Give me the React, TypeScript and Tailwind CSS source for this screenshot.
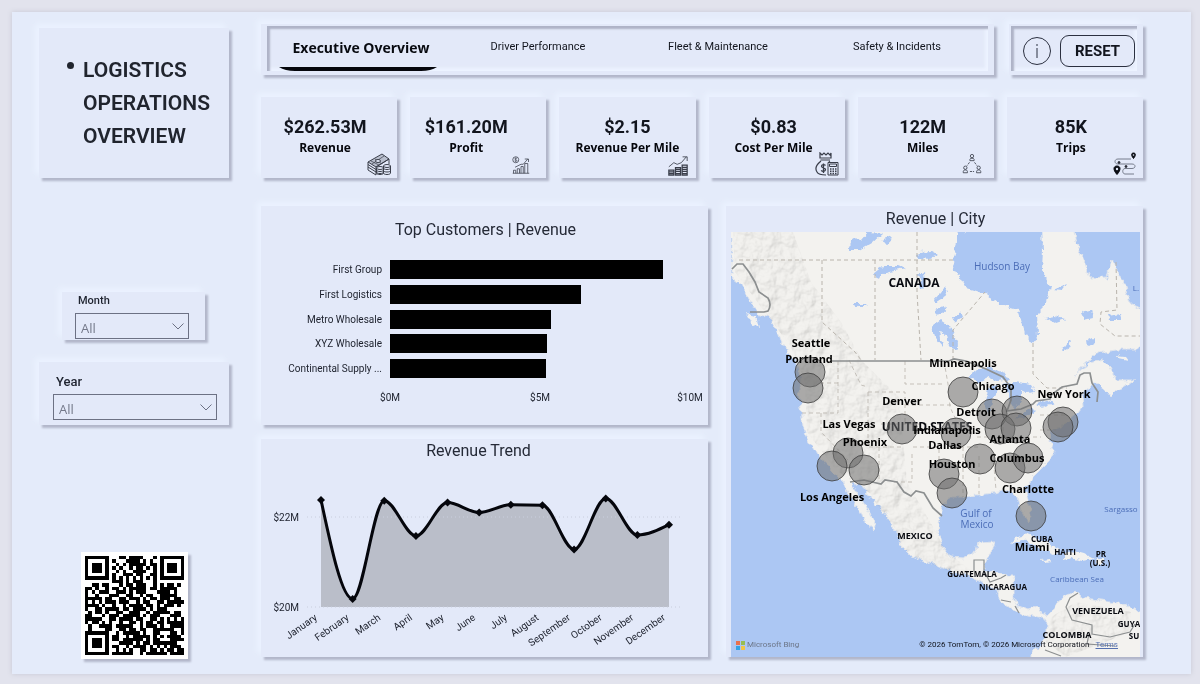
import type { ReactNode } from "react";

const raised =
  "bg-[#e3e9f9] shadow-[3px_3px_2px_#b2b7ca,-4px_-4px_6px_#ebf2ff]";
const inset = "shadow-[inset_3px_3px_2px_#aeb3c7,inset_-3px_-3px_3px_#edf3ff]";

const TABS = ["Executive Overview", "Driver Performance", "Fleet & Maintenance", "Safety & Incidents"];

const CUSTOMERS = [
  { name: "First Group", value: 9.1 },
  { name: "First Logistics", value: 6.35 },
  { name: "Metro Wholesale", value: 5.38 },
  { name: "XYZ Wholesale", value: 5.24 },
  { name: "Continental Supply ...", value: 5.2 },
];

const TREND: [string, number][] = [
  ["January", 22.38],
  ["February", 20.18],
  ["March", 22.36],
  ["April", 21.58],
  ["May", 22.32],
  ["June", 22.1],
  ["July", 22.27],
  ["August", 22.26],
  ["September", 21.28],
  ["October", 22.41],
  ["November", 21.6],
  ["December", 21.83],
];

const CITIES: { name: string; x: number; y: number }[] = [
  { name: "Seattle", x: 80, y: 115 },
  { name: "Portland", x: 78, y: 131 },
  { name: "Minneapolis", x: 232, y: 135 },
  { name: "Chicago", x: 262, y: 158 },
  { name: "New York", x: 333, y: 166 },
  { name: "Denver", x: 171, y: 173 },
  { name: "Detroit", x: 245, y: 184 },
  { name: "Las Vegas", x: 118, y: 196 },
  { name: "Indianapolis", x: 216, y: 202 },
  { name: "Phoenix", x: 134, y: 214 },
  { name: "Dallas", x: 214, y: 217 },
  { name: "Atlanta", x: 279, y: 211 },
  { name: "Houston", x: 221, y: 236 },
  { name: "Columbus", x: 286, y: 230 },
  { name: "Charlotte", x: 297, y: 261 },
  { name: "Los Angeles", x: 101, y: 269 },
  { name: "Miami", x: 301, y: 319 },
];

const BUBBLES = [
  [79, 140], [77, 156], [232, 160], [261, 182], [286, 179], [269, 197], [285, 196], [332, 190], [327, 195],
  [171, 197], [225, 201], [117, 221], [101, 234], [133, 238], [213, 242], [221, 261], [249, 227], [279, 236],
  [297, 226], [300, 284],
];

const COUNTRIES: { name: string; x: number; y: number; size: number }[] = [
  { name: "CANADA", x: 183, y: 55, size: 12 },
  { name: "UNITED STATES", x: 196, y: 199, size: 12 },
  { name: "MEXICO", x: 184, y: 307, size: 9 },
  { name: "GUATEMALA", x: 241, y: 345, size: 8 },
  { name: "NICARAGUA", x: 272, y: 358, size: 8 },
  { name: "CUBA", x: 311, y: 310, size: 8 },
  { name: "HAITI", x: 334, y: 323, size: 8 },
  { name: "PR", x: 370, y: 325, size: 8 },
  { name: "(U.S.)", x: 369, y: 334, size: 8 },
  { name: "VENEZUELA", x: 367, y: 382, size: 9 },
  { name: "COLOMBIA", x: 336, y: 406, size: 9 },
  { name: "GUYA", x: 398, y: 395, size: 8 },
  { name: "SU", x: 403, y: 407, size: 8 },
];

const QR = [
  "#######...##.####...#.#######",
  "#.....#.#...####.#.#..#.....#",
  "#.###.#..#.#.#####.##.#.###.#",
  "#.###.#.#.#..#.##.#.#.#.###.#",
  "#.###.#..#.#..####..#.#.###.#",
  "#.....#.#..###.##..##.#.....#",
  "#######.#.#.#.#.#.#.#.#######",
  "........###.#.###...#........",
  "..##.##...#.##.###..#.#.##.#.",
  "##.#..#.##.#.#####.##.#####..",
  "#.#.###..###.#.###...####.#..",
  "#..#...###..##..#.##..#####..",
  "#####.##..##.###.#.##.###.##.",
  "#.#.#.###.###..#.##..##.#####",
  "####.#..#..#.####.##.#.###.#.",
  "#..##.####.##.####.#.###.....",
  ".#.##.#..##..###..#.#####.##.",
  "##...#.###.#####.#.###...###.",
  "#####..##.####.##..##.#.#.#.#",
  "#.##.#.#..#..##.#.##.##.#####",
  ".#..####.#####..#.###.#..####",
  ".#....##..##.##.##..######..#",
  "#######..#.#####.#..##...##.#",
  "#.....#.##..#.#####.#.#.####.",
  "#.###.#.##.######.#.##...####",
  "#.###.#...####.#.##.#######..",
  "#.###.#.##..#.####.#.#.#.###.",
  "#.....#..#.#.#..##.##.#.##.##",
  "#######.######..#.######.####",
];

const LAND =
  "M0 -5L0 43L9 51L17 65L26 81L39 85L44 95L49 108L56 118L66 131L69 145L68 158L70 175L72 195L79 211L89 225L102 241L111 248L117 261L126 275L136 291L144 298L146 296L139 281L132 270L122 255L121 250L132 255L142 268L156 285L167 301L169 313L179 323L196 330L216 338L236 343L252 351L266 358L271 370L282 378L297 383L309 385L316 388L316 401L312 411L301 421L301 430L415 430L415 384L399 375L386 370L369 368L352 366L344 360L332 365L326 370L321 380L316 385L307 375L297 378L287 375L282 365L282 351L284 343L274 343L262 340L252 338L256 328L261 318L264 310L247 311L244 321L232 326L219 325L212 315L207 301L209 285L211 273L219 265L232 265L246 263L262 261L279 258L286 265L289 275L294 285L297 290L300 283L297 268L294 258L302 245L316 231L324 221L319 208L319 198L336 191L347 181L352 175L351 161L366 150L371 155L379 165L386 158L404 148L386 148L379 135L372 128L359 131L343 143L366 121L386 118L406 118L415 111L415 78L399 71L392 48L381 28L376 45L359 46L354 31L346 11L342 -5Z";

const HUDSON =
  "M236 -5L311 -5L312 18L311 38L319 55L316 71L306 81L307 105L302 111L294 101L287 78L269 73L252 61L236 56L227 41L224 28L229 11Z";

const LAKES = [
  "M236 145L246 138L258 135L274 141L278 147L266 149L258 146L248 151Z",
  "M258 157L265 152L268 156L262 166L260 178L256 182L254 173Z",
  "M272 152L282 150L300 153L304 160L296 161L290 158L290 168L284 178L279 170L277 160Z",
  "M283 186L302 176L304 178L292 187Z",
  "M304 173L321 167L324 171L310 175Z",
  "M117 18L122 7L130 8L137 0L152 1L141 11L129 18Z",
  "M142 42L152 34L167 34L174 37L158 40L145 47Z",
  "M202 93L209 88L220 95L227 112L225 118L217 115L214 104L209 100L212 115L204 106Z",
  "M203 68L214 55L218 57L212 66L204 71Z",
  "M188 43L193 40L194 54L190 58Z",
  "M185 22L198 19L206 24L199 27L187 26Z",
  "M227 -2L233 -2L233 41L226 43L221 35Z",
  "M203 79L212 75L214 80L207 83Z",
  "M222 85L229 81L231 86L224 90Z",
  "M123 72L136 72L130 76Z",
  "M313 86L325 84L334 87L322 91Z",
  "M350 80L360 78L362 86L354 88Z",
  "M376 83L388 81L390 88L378 88Z",
  "M331 118L338 108L340 110L335 119Z",
  "M357 108L363 105L363 112L358 115Z",
  "M323 57L335 52L331 58Z",
  "M150 8L161 4L157 12Z",
];

const ISLANDS = [
  "M278 312L284 306L296 303L308 308L318 312L329 319L322 322L308 316L292 307Z",
  "M333 322L342 319L353 322L363 327L352 329L341 326L333 328Z",
  "M310 328L318 327L320 330L312 331Z",
  "M365 326L374 326L374 331L366 331Z",
  "M384 123L394 124L397 128L388 126Z",
  "M16 82L25 84L28 96L21 92Z",
  "M301 3L306 5L304 12L300 8Z",
];

function KpiIcon({ name }: { name: string }) {
  const common = {
    viewBox: "0 0 24 24",
    fill: "none",
    stroke: "#3a3e4a",
    strokeWidth: 1,
    "aria-hidden": true,
    className: "absolute right-1.5 bottom-0.5 size-6",
  };
  if (name === "Revenue")
    return (
      <svg {...common}>
        <path d="M1 10L15 2L22 7L9 15Z" fill="#b9bfce" />
        <path d="M1 10v8l8 5v-8 M1 12.500l8 5 M1 15l8 5 M9 15l13-8v5" />
        <path d="M5 12L17 4 M8 7l7 5 M4 9l8 4" strokeWidth="0.700" />
        <ellipse cx="11" cy="9" rx="2.500" ry="1.500" fill="#e3e9f9" />
        <ellipse cx="13" cy="16" rx="3.500" ry="1.500" fill="#e3e9f9" />
        <path d="M9.500 16v5c0 2 7 2 7 0v-5 M9.500 18c0 2 7 2 7 0 M9.500 20c0 2 7 2 7 0" />
        <ellipse cx="20" cy="14" rx="3.500" ry="1.500" fill="#e3e9f9" />
        <path d="M16.500 14v7c0 2 7 2 7 0v-7 M16.500 16c0 2 7 2 7 0 M16.500 18.500c0 2 7 2 7 0" />
      </svg>
    );
  if (name === "Profit")
    return (
      <svg {...common} className="absolute right-4 bottom-1 size-[18px]">
        <circle cx="5" cy="5" r="4" />
        <path d="M6.500 3.500c-1-1-3-.500-3 .500s3 1 3 2-2 1.500-3 .500 M5 2v6" strokeWidth="0.800" />
        <path d="M2 23v-4h3v4 M7 23v-6h3v6 M12 23v-9h3v9 M17 23V10h4v13 M1 23h22 M4 15l8-4 3 0 6-7 M17 4h5v4" />
      </svg>
    );
  if (name === "Revenue Per Mile")
    return (
      <svg {...common} className="absolute right-2 bottom-0.5 size-5">
        <path d="M1 13l6-5 4 2 5-2 6-7 M17.500 1H23v5" />
        <path
          d="M1 17h6v6H1z M9 14h6v9H9z M17 11h6v12h-6z M1 19h6 M1 21h6 M9 16h6 M9 18.500h6 M9 21h6 M17 13.500h6 M17 16h6 M17 18.500h6 M17 21h6"
          strokeWidth="1.500"
        />
      </svg>
    );
  if (name === "Cost Per Mile")
    return (
      <svg {...common}>
        <path d="M5 1l2 2 2-2 2 2 2-2 2 2 1-2v5H5z M5.500 8H15 M6 9C1 13 0 17 2 20c1 2 3 3 9 3 M14 9l1 1.500" strokeWidth="1.200" />
        <path d="M10.500 13.500c-1-1.500-4-1-4 .800 0 2 4 1.200 4 3.200s-3 2.500-4.300.800 M8.500 11.500v9.500" strokeWidth="1.300" />
        <path d="M13 10.500h10V23H13z M14.500 12h7v2.500h-7z" />
        <path d="M15 17h1.500 M17.500 17H19 M20 17h1.500 M15 19.200h1.500 M17.500 19.200H19 M20 19.200h1.500 M15 21.400h1.500 M17.500 21.400H19 M20 21.400h1.500" strokeWidth="1.500" />
      </svg>
    );
  if (name === "Miles")
    return (
      <svg {...common} className="absolute right-3 bottom-1 size-5">
        <circle cx="12" cy="2.500" r="2" />
        <path d="M9.500 8V6.500c0-2 5-2 5 0V8z" />
        <circle cx="4" cy="16.500" r="2" />
        <path d="M1.500 22.500V21c0-2.500 5-2.500 5 0v1.500z" />
        <circle cx="20" cy="16.500" r="2" />
        <path d="M17.500 22.500V21c0-2.500 5-2.500 5 0v1.500z" />
        <path d="M9 10l-3 4 M15 10l3 4 M9.500 21h5" strokeDasharray="2.500 1" />
      </svg>
    );
  return (
    <svg {...common}>
      <path d="M18 7H5c-4 0-4 5 0 5h14c4 0 4 4.500 0 4.500h-7c-3 0-3 5.500 0 5.500h9" stroke="#777d8c" />
      <path d="M20.500 6.500C18 3.500 18 1 20.500 1s2.500 2.500 0 5.500z M4 22.500C-.500 17.500.500 14 4 14s4.500 3.500 0 8.500z" fill="#0b0d14" stroke="#0b0d14" />
      <circle cx="20.500" cy="3" r="0.800" fill="#e3e9f9" stroke="none" />
      <circle cx="4" cy="17" r="1.200" fill="#e3e9f9" stroke="none" />
      <circle cx="6" cy="10.500" r="1" fill="#0b0d14" />
      <circle cx="13" cy="14.500" r="1" fill="#0b0d14" />
    </svg>
  );
}

const KPIS = [
  { value: "$262.53M", label: "Revenue", pad: "pr-2" },
  { value: "$161.20M", label: "Profit", pad: "pr-6" },
  { value: "$2.15", label: "Revenue Per Mile", pad: "pr-0" },
  { value: "$0.83", label: "Cost Per Mile", pad: "pr-1.5" },
  { value: "122M", label: "Miles", pad: "pr-1.5" },
  { value: "85K", label: "Trips", pad: "pr-2" },
];

function Filter({ id, label, options, className, labelClass }: {
  id: string;
  label: string;
  options: string[];
  className: string;
  labelClass: string;
}) {
  return (
    <div className={`${raised} ${className}`}>
      <label htmlFor={id} className={`block font-medium text-[#1f2430] ${labelClass}`}>
        {label}
      </label>
      <div className="relative">
        <select
          id={id}
          className="block h-[26px] w-full appearance-none border border-[#6c7184] bg-transparent px-[5px] pt-1 font-['Open_Sans',sans-serif] text-[13px] leading-none text-[#74798a]"
        >
          {options.map((o) => (
            <option key={o}>{o}</option>
          ))}
        </select>
        <svg viewBox="0 0 12 7" fill="none" stroke="#6c7184" className="pointer-events-none absolute top-2.5 right-[5px] h-[7px] w-3" aria-hidden="true">
          <path d="M0.500 0.500L6 6L11.500 0.500" />
        </svg>
      </div>
    </div>
  );
}

function QrCode() {
  return (
    <svg viewBox="0 0 29 29" shapeRendering="crispEdges" role="img" aria-label="QR code" className="w-full">
      {QR.map((row, y) =>
        [...row].map((c, x) => (c === "#" ? <rect key={`${x}-${y}`} x={x} y={y} width="1" height="1" /> : null))
      )}
    </svg>
  );
}

function ChartTitle({ children }: { children: ReactNode }) {
  return <h2 className="text-base leading-6 text-[#252a37]">{children}</h2>;
}

function CustomersChart() {
  return (
    <section className={`${raised} h-[219px] pt-3 pr-[18px] pl-4`}>
      <div className="pl-1 text-center">
        <ChartTitle>Top Customers | Revenue</ChartTitle>
      </div>
      <div className="mt-[18px] flex h-[118px] flex-col justify-between">
        {CUSTOMERS.map((c) => (
          <div key={c.name} className="flex h-[19px] items-center">
            <span className="w-[105px] shrink-0 text-right text-[10px] whitespace-nowrap text-[#1c202c]">{c.name}</span>
            <div className="ml-2 h-full flex-1">
              <div className="h-full bg-black" style={{ width: `${c.value * 10}%` }} />
            </div>
          </div>
        ))}
      </div>
      <div className="mt-3 ml-[113px] flex justify-between text-[10px] leading-4 text-[#1c202c]">
        {["$0M", "$5M", "$10M"].map((t) => (
          <span key={t} className="flex w-0 justify-center">{t}</span>
        ))}
      </div>
    </section>
  );
}

// monotone cubic interpolation, so the line never overshoots its points
function monotonePath(pts: [number, number][]) {
  const s = pts.slice(1).map((p, i) => (p[1] - pts[i][1]) / (p[0] - pts[i][0]));
  const n = pts.length;
  const t = pts.map((_, i) => {
    if (i === 0 || i === n - 1) return 0;
    const a = s[i - 1];
    const b = s[i];
    if (a * b <= 0) return 0;
    return Math.sign(a) * 2 * Math.min(Math.abs(a), Math.abs(b), Math.abs(a + b) / 4);
  });
  t[0] = (3 * s[0] - t[1]) / 2;
  t[n - 1] = (3 * s[n - 2] - t[n - 2]) / 2;
  let d = `M${pts[0][0]} ${pts[0][1]}`;
  for (let i = 1; i < n; i++) {
    const [x0, y0] = pts[i - 1];
    const [x1, y1] = pts[i];
    const dx = (x1 - x0) / 3;
    d += `C${x0 + dx} ${y0 + dx * t[i - 1]} ${x1 - dx} ${y1 - dx * t[i]} ${x1} ${y1}`;
  }
  return d;
}

function TrendChart() {
  const pts = TREND.map(([, v], i): [number, number] => [60 + (i * 348) / 11, 47 + (22 - v) * 45]);
  const line = monotonePath(pts);
  return (
    <section className={`${raised} h-[218px]`}>
      <div className="pr-3 text-center">
        <ChartTitle>Revenue Trend</ChartTitle>
      </div>
      <svg viewBox="0 0 447 184" className="mt-[7px] w-full text-[10px]" role="img" aria-label="Revenue by month">
        <path d={`${line}L408 137L60 137Z`} fill="#babec9" />
        {[47, 137].map((y) => (
          <line key={y} x1="46" x2="420" y1={y} y2={y} stroke="#c9cedd" strokeDasharray="1 3" />
        ))}
        <text x="38" y="51" textAnchor="end" fill="#1c202c">$22M</text>
        <text x="38" y="141" textAnchor="end" fill="#1c202c">$20M</text>
        <path d={line} fill="none" stroke="#05060c" strokeWidth="3" />
        {pts.map(([x, y], i) => (
          <g key={TREND[i][0]}>
            <path d={`M${x - 4} ${y}L${x} ${y - 4}L${x + 4} ${y}L${x} ${y + 4}Z`} fill="#05060c" />
            <text textAnchor="end" fill="#1c202c" transform={`translate(${x - 3} 149) rotate(-35)`}>
              {TREND[i][0]}
            </text>
          </g>
        ))}
      </svg>
    </section>
  );
}

function CityMap() {
  return (
    <section className={`${raised} h-[451px] pr-[3px] pl-[5px]`}>
      <div className="pt-px pb-px text-center">
        <ChartTitle>Revenue | City</ChartTitle>
      </div>
      <div className="relative">
        <svg
          viewBox="0 0 409 425"
          className="w-full bg-[#acc7f3] font-['Open_Sans',sans-serif] font-bold"
          role="img"
          aria-label="Map of revenue by city"
        >
          <defs>
            <filter id="coast" x="-5%" y="-5%" width="110%" height="110%">
              <feTurbulence type="fractalNoise" baseFrequency="0.15" numOctaves="3" seed="4" />
              <feDisplacementMap in="SourceGraphic" scale="7" xChannelSelector="R" yChannelSelector="G" />
            </filter>
            <filter id="relief" x="0" y="0" width="100%" height="100%">
              <feTurbulence type="fractalNoise" baseFrequency="0.09" numOctaves="4" seed="9" result="n" />
              <feDiffuseLighting in="n" surfaceScale="4" lightingColor="#ffffff" result="l">
                <feDistantLight azimuth="225" elevation="60" />
              </feDiffuseLighting>
              <feComposite in="l" in2="SourceAlpha" operator="in" />
            </filter>
            <clipPath id="land">
              <path d={LAND} />
            </clipPath>
          </defs>
          <g filter="url(#coast)">
            <path d={LAND} fill="#f3f2ef" stroke="#dfe4ec" />
            {ISLANDS.map((d) => <path key={d} d={d} fill="#f3f2ef" />)}
            <path d={HUDSON} fill="#acc7f3" />
            {LAKES.map((d) => <path key={d} d={d} fill="#acc7f3" />)}
          </g>
          <g clipPath="url(#land)" opacity="0.28" style={{ mixBlendMode: "multiply" }}>
            <path
              d="M2 0L62 0L80 50L110 90L132 130L168 165L176 250L205 300L215 320L240 338L240 350L190 330L165 310L140 262L105 238L76 200L74 150L60 115L30 75L4 40Z M320 385L345 370L400 380L400 400L335 425L315 410Z"
              filter="url(#relief)"
            />
          </g>
          <g fill="none" stroke="#b9b4ac" strokeDasharray="4 3">
            <path d="M8 28H224 M91 28V90L124 120L130 128 M144 28V128 M186 0V60L190 128 M222 128V98L254 60 M302 111V142L316 156L336 156 M385 30L386 78L370 80L369 92L384 104H409" />
            <path d="M107 129V181H70 M90 181V200L117 228 M107 151H88 M118 128L130 153L137 155 M137 160H174V192 M137 160V215H171 M174 129V152H214 M174 173H220 M213 129L217 152L219 175L226 190 M150 192H195L232 192 M148 215V250 M182 215H208V230L229 233 M181 222V250H160 M229 215H250 M232 215V265 M248 224V262 M262 224L265 258 M246 205H310 M272 188V205 M309 183H335 M309 198H325 M279 258L296 256" strokeWidth="0.800" />
          </g>
          <g fill="none" stroke="#8c8f90" strokeWidth="1.700">
            <path d="M1 37L6 32L12 32L18 40L24 50L28 60L37 66Q41 73 37 79L33 80H19 M101 129H218L223 127L235 129L255 137L272 145L280 156L280 168L276 179L290 177L302 172L305 169L319 167L320 163L331 155L346 152L349 143L353 141H359L361 151L367 160L366 170 M119 250L133 248L150 252L154 248L166 250L173 260L180 264L185 259L193 261L202 276L211 284" />
            <path d="M243 339V328H253V343 M253 339L259 350L270 346L275 343 M270 368L280 370 M284 374L288 381 M347 361L339 366L335 375L341 388L361 393V402L379 405L399 400L404 392 M358 402L356 412L384 414 M314 418L330 424" strokeWidth="1.200" />
          </g>
          <g fill="#080a10" textAnchor="middle">
            {COUNTRIES.map((c) => (
              <text key={c.name} x={c.x} y={c.y} fontSize={c.size}>{c.name}</text>
            ))}
          </g>
          <g fill="#4b6db7" fontWeight="400" fontSize="10" textAnchor="middle">
            <text x="271" y="38">Hudson Bay</text>
            <text x="245" y="285">Gulf of</text>
            <text x="246" y="296">Mexico</text>
            <text x="390" y="280" fontSize="8">Sargasso</text>
            <text x="346" y="350" fontSize="8">Caribbean Sea</text>
            <text x="405" y="59" fontSize="8">L.</text>
          </g>
          {BUBBLES.map(([x, y]) => (
            <circle key={`${x}-${y}`} cx={x} cy={y} r="15" fill="#6e6e6e" fillOpacity="0.550" stroke="#3d3d3d" strokeOpacity="0.800" />
          ))}
          <g fill="#000" fontSize="11" textAnchor="middle">
            {CITIES.map((c) => (
              <text key={c.name} x={c.x} y={c.y}>{c.name}</text>
            ))}
          </g>
        </svg>
        <div className="absolute inset-x-0 bottom-1 flex items-center pr-[22px] pl-[5px] text-[8px] leading-4 text-[#10131b]">
          <svg viewBox="0 0 9 9" className="size-[9px]" aria-hidden="true">
            <path d="M0 0h4v4H0z" fill="#e8714f" />
            <path d="M5 0h4v4H5z" fill="#97bd53" />
            <path d="M0 5h4v4H0z" fill="#33a3e6" />
            <path d="M5 5h4v4H5z" fill="#f0c548" />
          </svg>
          <span className="ml-0.5 text-[#6c7688]">Microsoft Bing</span>
          <span className="ml-auto">© 2026 TomTom, © 2026 Microsoft Corporation</span>
          <a href="#terms" className="ml-1.5 text-[#5470b0] underline">Terms</a>
        </div>
      </div>
    </section>
  );
}

export default function App() {
  return (
    <div className="min-h-screen bg-[#e2e3ed] pt-3 pr-[9px] pb-[10px] pl-3 font-['Roboto',sans-serif] text-[#12151e]">
      <div className="grid min-h-[662px] grid-cols-[190fr_882fr] gap-8 bg-[#e4ebfa] pt-3 pr-[48px] pl-[27px] shadow-[0_0_5px_#c6c8d4]">
        <aside className="pt-1">
          <div className={`${raised} flex h-[150px] gap-[9px] pt-[26px] pl-7`}>
            <span className="mt-2 size-[7px] shrink-0 rounded-full bg-[#20242e]" />
            <h1 className="text-[21px] leading-[33px] font-semibold text-[#20242e]">
              LOGISTICS
              <br />
              OPERATIONS
              <br />
              OVERVIEW
            </h1>
          </div>
          <Filter
            id="month"
            label="Month"
            options={["All", ...TREND.map(([m]) => m)]}
            className="mt-[114px] mr-6 ml-[23px] h-[48px] pr-4 pl-[13px]"
            labelClass="pl-[3px] pb-[3px] text-[11px] leading-[18px]"
          />
          <Filter
            id="year"
            label="Year"
            options={["All", "2022", "2023", "2024"]}
            className="mt-[22px] h-[63px] pt-[11px] pr-3 pl-[14px]"
            labelClass="pl-[3px] text-[13px] leading-[18px] pb-[3px]"
          />
          <div className="mx-auto mt-[127px] w-[107px] bg-white p-1 shadow-[3px_3px_2px_#b2b7ca]">
            <QrCode />
          </div>
        </aside>

        <main>
          <div className="grid grid-cols-[733fr_134fr] gap-[15px]">
            <div className={`${raised} h-[51px] px-1.5 pt-0.5 pb-1`}>
              <nav className={`${inset} grid h-full grid-cols-[188fr_166fr_194fr_164fr] pr-[9px]`}>
                {TABS.map((t, i) => (
                  <a key={t} href={`#${i}`} className="relative flex items-center justify-center pb-0.5 text-[11px]">
                    {i === 0 ? (
                      <span className="font-['Open_Sans',sans-serif] text-sm font-bold text-[#080a10]">{t}</span>
                    ) : (
                      t
                    )}
                    {i === 0 && (
                      <svg viewBox="0 0 158 4" className="absolute bottom-0 left-3 h-1 w-[158px]" aria-hidden="true">
                        <path d="M0 0H158Q152 4 142 4H16Q6 4 0 0Z" fill="#05060c" />
                      </svg>
                    )}
                  </a>
                ))}
              </nav>
            </div>
            <div className={`${raised} h-[51px] pt-0.5 pr-1.5 pb-1 pl-0.5`}>
              <div className={`${inset} flex h-full items-center gap-[9px] pt-1 pr-0.5 pl-3`}>
                <button aria-label="Information" className="flex size-7 shrink-0 items-center justify-center rounded-full border border-[#2b3040]">
                  <svg viewBox="0 0 4 14" fill="none" stroke="#2b3040" className="h-[14px] w-1" aria-hidden="true">
                    <path d="M2 0v2 M2 4v10" />
                  </svg>
                </button>
                <button className="h-8 flex-1 rounded-[9px] border border-[#2b3040] pt-0.5 text-[15px] font-bold">RESET</button>
              </div>
            </div>
          </div>

          <div className="mt-[22px] grid grid-cols-6 gap-[13px]">
            {KPIS.map((k) => (
              <div key={k.label} className={`${raised} relative h-[81px] pt-[18px] text-center ${k.pad}`}>
                <div className="text-lg leading-6 font-bold">{k.value}</div>
                <div className="font-['Open_Sans',sans-serif] text-xs leading-[18px] font-bold whitespace-nowrap text-[#05060c]">{k.label}</div>
                <KpiIcon name={k.label} />
              </div>
            ))}
          </div>

          <div className="mt-7 grid grid-cols-[447fr_417fr] gap-[18px]">
            <div className="flex flex-col gap-[14px]">
              <CustomersChart />
              <TrendChart />
            </div>
            <CityMap />
          </div>
        </main>
      </div>
    </div>
  );
}
